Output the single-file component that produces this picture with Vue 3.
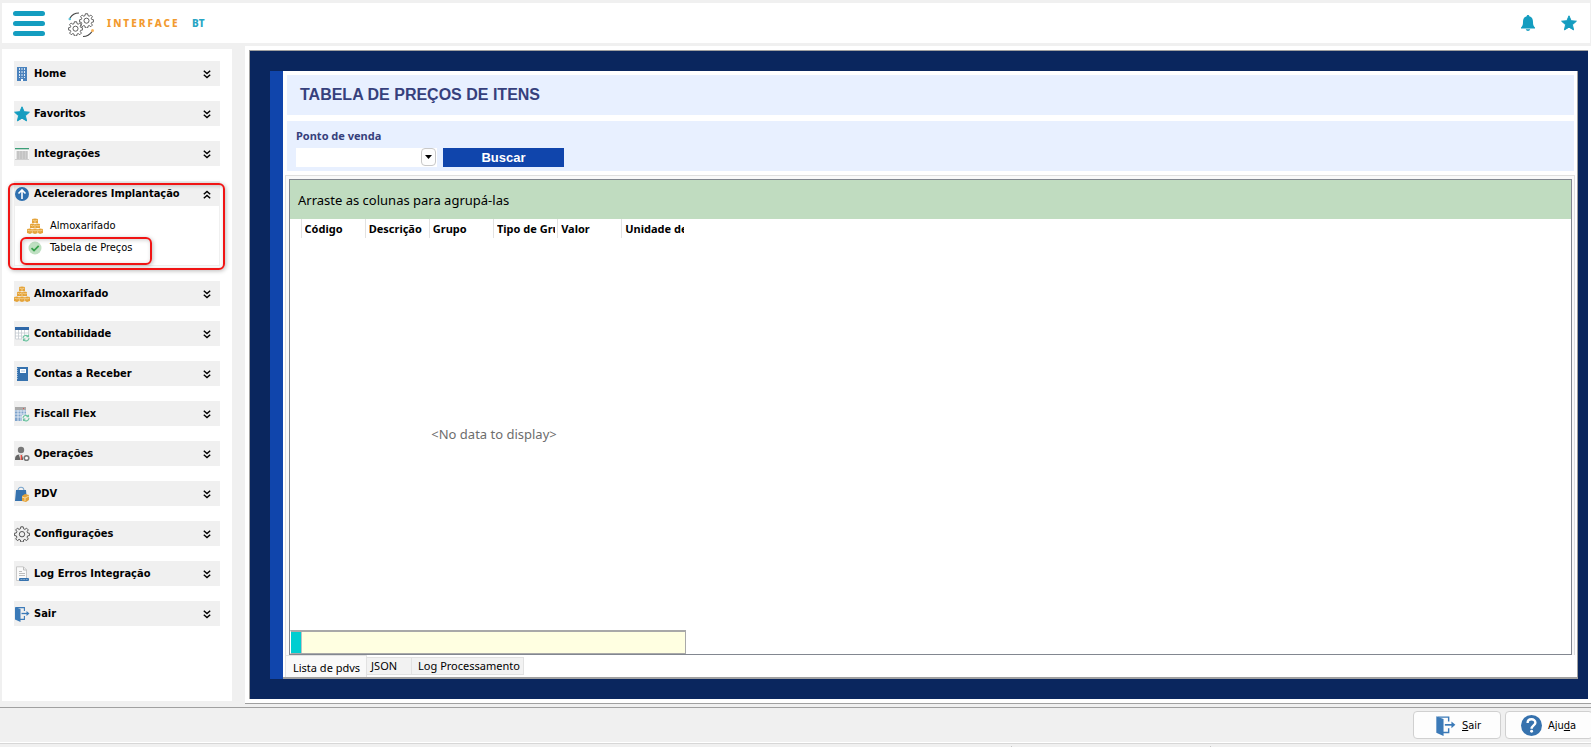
<script setup>
import { ref } from 'vue'

const groups = [
  { icon: 'building', label: 'Home' },
  { icon: 'star', label: 'Favoritos' },
  { icon: 'sheet', label: 'Integrações' },
  {
    icon: 'up',
    label: 'Aceleradores Implantação',
    items: [
      { icon: 'boxes', label: 'Almoxarifado' },
      { icon: 'check', label: 'Tabela de Preços', marked: true },
    ],
  },
  { icon: 'boxes', label: 'Almoxarifado' },
  { icon: 'calendar', label: 'Contabilidade' },
  { icon: 'book', label: 'Contas a Receber' },
  { icon: 'calc', label: 'Fiscall Flex' },
  { icon: 'user', label: 'Operações' },
  { icon: 'bag', label: 'PDV' },
  { icon: 'cog', label: 'Configurações' },
  { icon: 'log', label: 'Log Erros Integração' },
  { icon: 'door', label: 'Sair' },
]
const columns = ['Código', 'Descrição', 'Grupo', 'Tipo de Gru', 'Valor', 'Unidade de']
const tabs = ['Lista de pdvs', 'JSON', 'Log Processamento']
const activeTab = ref(0)
</script>

<template>
  <div class="app">
    <svg class="sprite" aria-hidden="true">
      <symbol id="building" viewBox="0 0 16 16">
        <path fill="#4a82bd" d="M3 1h10v14H3z" />
        <path stroke="#dce8f4" stroke-width="1" d="M5.500 2v10M8 2v10M10.500 2v10" />
        <path stroke="#4a82bd" stroke-width="1" d="M3 4.500h10M3 7.500h10M3 10.500h10" />
        <path fill="#fff" d="M7 13h2v2H7z" />
      </symbol>
      <symbol id="star" viewBox="0 0 16 16">
        <path fill="#149dc0" stroke="#149dc0" stroke-linejoin="round" d="M8 .8l2.100 4.900 5.300.5-4 3.500 1.200 5.200L8 12.200l-4.600 2.700 1.200-5.200-4-3.500 5.300-.5z" />
      </symbol>
      <symbol id="sheet" viewBox="0 0 16 16">
        <path fill="#cfcfcf" d="M1 3h14v11H1z" />
        <path fill="#3c9f78" d="M1 2h14v1.500H1z" />
        <path fill="#f8f8f8" d="M1 3.500h14v1.500H1zM1 4h1.500v9H1zM13.500 4H15v9h-1.500z" />
        <path stroke="#b0b0b0" stroke-width=".7" d="M4 5v8M7 5v8M10 5v8M13 5v8" />
      </symbol>
      <symbol id="up" viewBox="0 0 16 16">
        <circle cx="8" cy="8" r="7" fill="#2f70b0" />
        <path fill="none" stroke="#fff" stroke-width="1.600" d="M8 13V4M4.500 7.500L8 4l3.500 3.500" />
      </symbol>
      <symbol id="boxes" viewBox="0 0 16 16">
        <path fill="#e4a33a" d="M5 1l3-.5 3 .5v4H5zM3 6l3-.5 2 .5 2-.5 3 .5v4H3zM0 11l3-.5 2 .5 3-.5 3 .5 2-.5 3 .5v4l-3 1-2-1-3 1-3-1-2 1-3-1z" />
        <path stroke="#f6d79c" stroke-width=".8" fill="none" d="M5.500 2l2.500 1 2.500-1M8 3v2M8 6.500v3.500M3.500 7l2 1 2-1M9 7l2 1 2-1M5.300 11.500v3.500M10.700 11.500v3.500M.5 12l2.500 1 2-1M6 12l2 1 2-1M11 12l2 1 2.500-1" />
      </symbol>
      <symbol id="check" viewBox="0 0 16 16">
        <circle cx="8" cy="8" r="6.500" fill="#bfe0c2" />
        <path fill="none" stroke="#38a04c" stroke-width="1.700" d="M4.500 8.200L7 10.500l4.700-4.700" />
      </symbol>
      <symbol id="calendar" viewBox="0 0 16 16">
        <path fill="#fff" d="M1 1h14v12H1z" />
        <path fill="#2f68a8" d="M1 1h14v3H1z" />
        <path fill="none" stroke="#c5cbd2" stroke-width=".8" d="M1.500 4v9H9M4.500 4v9M7.500 4v9M10.500 4v5M14.500 4v5M1 7h14M1 10h9" />
        <path fill="#f0f0f0" d="M8 9h8v6H8z" />
        <path fill="none" stroke="#6cc3a0" stroke-width="1.100" d="M9 12a2.800 2.800 0 0 1 5-1.500M15 12a2.800 2.800 0 0 1-5 1.800M14.500 8.800v2h-2M9.500 15v-2h2" />
      </symbol>
      <symbol id="book" viewBox="0 0 16 16">
        <path fill="#3672ae" d="M3 1h11v14H3z" />
        <path stroke="#8fb2d5" stroke-dasharray="1 1" d="M3.500 2v12" />
        <path fill="#fff" d="M6 3h6v4H6z" />
        <path stroke="#aac4de" d="M7 5h4" />
      </symbol>
      <symbol id="calc" viewBox="0 0 16 16">
        <path fill="#7fa3cb" d="M1 1h11v14H1z" />
        <path fill="#aaa" d="M1 1h11v3H1z" />
        <path fill="#d9534f" d="M9 2h1v1H9z" />
        <path fill="none" stroke="#e8eef6" stroke-width=".9" d="M1 5h11M1 8h11M1 11h8M4 4v11M7 4v11M10 4v5" />
        <path fill="#f0f0f0" d="M8 9h8v6H8z" />
        <path fill="none" stroke="#6cc3a0" stroke-width="1.100" d="M9 12a2.800 2.800 0 0 1 5-1.500M15 12a2.800 2.800 0 0 1-5 1.800M14.500 8.800v2h-2M9.500 15v-2h2" />
      </symbol>
      <symbol id="user" viewBox="0 0 16 16">
        <circle cx="7" cy="4" r="3.200" fill="#777" />
        <path fill="#666" d="M1 14c0-4 1-5 4-5.500h4V14z" />
        <path fill="#fff" d="M5 8.500h4L7.500 14h-1z" />
        <path fill="#e14b3c" d="M6.500 9h1.500v5H6.500z" />
        <circle cx="12.500" cy="12" r="2.300" fill="#fff" stroke="#777" stroke-width="1.600" />
      </symbol>
      <symbol id="bag" viewBox="0 0 16 16">
        <path fill="none" stroke="#79a4cb" stroke-width="1.100" d="M4 5c0-5 6-5 6 0" />
        <path fill="#3672ae" d="M2 4h10l1 11H1z" />
        <path fill="#e4a33a" d="M8 10l3-2 4 1v5l-3 2-4-1z" />
        <path fill="none" stroke="#f8dca4" d="M8 11l3 1 4-2M11 12v3" />
      </symbol>
      <symbol id="cog" viewBox="0 0 16 16">
        <path fill="none" stroke="#555" stroke-linejoin="round" d="M6.800.8h2.400l.4 2 1.300.6 1.700-1.200 1.700 1.700-1.200 1.700.5 1.300 2 .4v2.200l-2 .4-.5 1.300 1.200 1.700-1.700 1.700-1.700-1.200-1.300.6-.4 2H6.800l-.4-2-1.300-.6-1.700 1.200-1.700-1.700 1.200-1.700-.5-1.300-2-.4V7.300l2-.4.5-1.300-1.200-1.700 1.700-1.700 1.700 1.200 1.300-.6z" />
        <circle cx="8" cy="8.200" r="2.700" fill="none" stroke="#555" />
      </symbol>
      <symbol id="log" viewBox="0 0 16 16">
        <path fill="#fafafa" stroke="#c8c8c8" d="M2.500.8h7l3 3V14.500h-10z" />
        <path fill="none" stroke="#bdbdbd" d="M9.500 1v3h3M5 5.500h3M5 7.500h6M5 9.500h6" />
        <rect x="5" y="12" width="10" height="3" rx="1" fill="#3672ae" />
        <path stroke="#7fa6cd" d="M6.500 13.500h7" stroke-dasharray="2 .7" />
      </symbol>
      <symbol id="door" viewBox="0 0 16 16">
        <path fill="none" stroke="#3b7ab8" stroke-width="1.100" d="M2 1.600h8.400V5M10.400 10v3.400H6" />
        <path fill="#3b7ab8" d="M1 1l5.500 2v13L1 13.500z" />
        <path fill="none" stroke="#3b7ab8" stroke-width="1.300" d="M7.500 7.500H14" />
        <path fill="#3b7ab8" d="M12.500 5l3 2.500-3 2.500z" />
      </symbol>
      <symbol id="down" viewBox="0 0 8 9">
        <path fill="none" stroke="#000" stroke-width="1.500" d="M.8.800L4 3.500 7.200.8M.8 4.800L4 7.500l3.200-2.700" />
      </symbol>
    </svg>

    <header class="top">
      <button class="burger" aria-label="Menu"><i /><i /><i /></button>
      <svg class="logo" viewBox="0 0 27 26" aria-hidden="true">
        <use href="#cog" x="11" y="1" width="15" height="15" />
        <use href="#cog" x="0" y="9" width="15" height="15" />
        <path fill="none" stroke="#444" stroke-width="1.200" d="M2 6C4 2.500 7 1 11 1M15 24.500c4 0 7-2 9-5" />
        <circle cx="1.800" cy="7" r="1.300" fill="#5cc3d8" />
        <circle cx="24.500" cy="18.500" r="1.500" fill="#f9b45c" />
      </svg>
      <span class="brand">INTERFACE</span>
      <span class="brand-bt">BT</span>
      <button class="top-icon bell" aria-label="Notificações">
        <svg viewBox="0 0 16 16"><path fill="#149dc0" d="M8 0c1 0 1.300.6 1.300 1.300C12 2 13 4 13 7c0 3 .5 4 2 5.500v1H1v-1C2.500 11 3 10 3 7c0-3 1-5 3.700-5.700C6.700.6 7 0 8 0zM5.800 14.300h4.400C9.800 16.500 6.200 16.500 5.800 14.300z" /></svg>
      </button>
      <button class="top-icon" aria-label="Favoritos"><svg><use href="#star" /></svg></button>
    </header>

    <div class="middle">
      <nav class="side">
        <section v-for="g in groups" :key="g.label" class="group" :class="{ open: g.items }">
          <button class="group-head" :aria-expanded="!!g.items">
            <svg class="ico"><use :href="'#' + g.icon" /></svg>
            <span>{{ g.label }}</span>
            <svg class="chev"><use href="#down" /></svg>
          </button>
          <div v-if="g.items" class="group-body">
            <a v-for="it in g.items" :key="it.label" href="#" class="item" :class="{ marked: it.marked }">
              <svg class="ico"><use :href="'#' + it.icon" /></svg>{{ it.label }}
            </a>
          </div>
        </section>
      </nav>

      <main class="main">
        <div class="navy">
          <div class="strip"></div>
          <div class="window">
            <div class="title"><h1>TABELA DE PREÇOS DE ITENS</h1></div>
            <form class="filter" @submit.prevent>
              <label for="pdv">Ponto de venda</label>
              <div class="filter-row">
                <div class="combo">
                  <select id="pdv"><option></option></select>
                  <span class="drop" aria-hidden="true"><svg viewBox="0 0 7 4"><path d="M0 0h7L3.500 4z" /></svg></span>
                </div>
                <button class="search">Buscar</button>
              </div>
            </form>
            <div class="pages">
              <div class="grid">
                <div class="groupbar">Arraste as colunas para agrupá-las</div>
                <div class="sheet">
                  <table>
                    <thead>
                      <tr>
                        <td class="mark"></td>
                        <th v-for="c in columns" :key="c"><div>{{ c }}</div></th>
                      </tr>
                    </thead>
                  </table>
                  <p class="empty">&lt;No data to display&gt;</p>
                  <div class="summary"><i /></div>
                </div>
              </div>
            </div>
            <div class="tabs" role="tablist">
              <button v-for="(t, i) in tabs" :key="t" role="tab" :class="{ on: activeTab === i }" :aria-selected="activeTab === i" @click="activeTab = i">{{ t }}</button>
            </div>
          </div>
        </div>
      </main>
    </div>

    <footer class="actions">
      <button class="action"><svg><use href="#door" /></svg><span><u>S</u>air</span></button>
      <button class="action help">
        <svg viewBox="0 0 20 20"><circle cx="10" cy="10" r="10" fill="#3672ae" /><path fill="none" stroke="#fff" stroke-width="2.300" d="M6.300 7.500C6.300 3 13.700 3 13.700 7.300c0 2.500-3.600 2.700-3.600 5.700" /><circle cx="10.100" cy="15.500" r="1.400" fill="#fff" /></svg>
        <span>Aju<u>d</u>a</span>
      </button>
    </footer>
    <div class="status"><i /><i /></div>
  </div>
</template>

<style>
body {
  background: #f0f0f0;
}
</style>

<style scoped>
* {
  box-sizing: border-box;
}
.app {
  display: flex;
  flex-direction: column;
  min-height: 100vh;
  padding-top: 3px;
  overflow: hidden;
  background: #f0f0f0;
  color: #000;
  font: 11px/14px "DejaVu Sans Condensed", "DejaVu Sans", sans-serif;
}
button {
  padding: 0;
  border: 0;
  background: none;
  color: inherit;
  font: inherit;
}
.sprite {
  position: absolute;
  width: 0;
  height: 0;
}
.top {
  display: flex;
  align-items: center;
  height: 40px;
  margin: 0 1px 0 2px;
  padding: 0 13px 0 11px;
  background: #fff;
}
.burger {
  display: grid;
  gap: 5px;
  width: 32px;
}
.burger i {
  height: 5px;
  border-radius: 3px;
  background: #149dc0;
}
.logo {
  width: 27px;
  height: 26px;
  margin: 4px 12px 0 23px;
}
.brand,
.brand-bt {
  font: 800 10px/14px "Noto Sans", sans-serif;
}
.brand {
  width: 85px;
  color: #f29a2e;
  letter-spacing: 2px;
}
.brand-bt {
  color: #28a5c4;
}
.top-icon {
  width: 16px;
  height: 16px;
}
.top-icon svg {
  display: block;
  width: 16px;
  height: 16px;
}
.bell {
  margin: 0 25px 0 auto;
}
.middle {
  flex: 1;
  display: flex;
  gap: 13px;
  padding: 3px 0 3px 2px;
  border-bottom: 1px solid #a0a0a0;
}
.side {
  width: 230px;
  flex: none;
  display: flex;
  flex-direction: column;
  gap: 15px;
  margin: 3px 0;
  padding: 12px;
  background: #fff;
}
.group {
  position: relative;
}
.group-head {
  display: flex;
  align-items: center;
  gap: 4px;
  width: 100%;
  height: 25px;
  padding: 1px 9px 0 0;
  background: #f0f0f0;
  font-weight: bold;
}
.ico {
  flex: none;
  width: 16px;
  height: 16px;
}
.chev {
  width: 8px;
  height: 9px;
  margin-left: auto;
}
.open .chev {
  transform: rotate(180deg);
}
.group-body {
  display: flex;
  flex-direction: column;
  gap: 6px;
  height: 60px;
  padding: 12px 0 0 12px;
  border: solid #f0f0f0;
  border-width: 0 1px 1px;
}
.item {
  position: relative;
  display: flex;
  align-items: center;
  gap: 7px;
  height: 16px;
  color: #000;
  text-decoration: none;
}
.open::after,
.marked::after {
  content: "";
  position: absolute;
  border: 2px solid #f01414;
  border-radius: 6px;
  box-shadow: 1px 1px 4px #0004, inset 1px 1px 4px #0003;
  pointer-events: none;
}
.open::after {
  inset: 2px -5px -4px -6px;
}
.marked::after {
  left: -7px;
  top: -3px;
  width: 128px;
  height: 24px;
}
.main {
  flex: 1;
  min-width: 0;
  display: flex;
  padding: 4px 0 4px 4px;
  border-bottom: 1px solid #a0a0a0;
  background: #fff;
}
.navy {
  flex: 1;
  min-width: 0;
  display: flex;
  margin-right: 3px;
  padding: 20px 10px 20px 20px;
  border: solid #a0a0a0;
  border-width: 1px 0 0 1px;
  background: #0a265e;
}
.strip {
  flex: none;
  width: 13px;
  background: #1045ac;
}
.window {
  flex: 1;
  min-width: 0;
  display: flex;
  flex-direction: column;
  padding-top: 4px;
  border-right: 1px solid #a0a0a0;
  border-bottom: 2px solid #a0a0a0;
  background: #fff;
}
.title,
.filter {
  margin: 0 3px 6px 4px;
  background: #e8f0ff;
}
.title {
  height: 40px;
  padding: 10px 13px;
}
h1 {
  margin: 0;
  color: #36407c;
  font: bold 16px/20px "Liberation Sans", Arial, sans-serif;
}
.filter {
  height: 50px;
  margin-bottom: 4px;
  padding: 8px 9px;
}
.filter label {
  display: block;
  margin-bottom: 5px;
  color: #36407c;
  font: bold 11px/14px "Noto Sans", sans-serif;
}
.filter-row {
  display: flex;
  gap: 6px;
}
.combo {
  position: relative;
  width: 141px;
  height: 19px;
}
.combo select {
  display: block;
  width: 100%;
  height: 100%;
  border: 0;
  appearance: none;
  background: #fff;
}
.drop {
  position: absolute;
  top: 0;
  right: 1px;
  display: grid;
  place-items: center;
  width: 15px;
  height: 18px;
  border: 1px solid #c8c8c8;
  border-radius: 4px;
  background: #fdfdfd;
  pointer-events: none;
}
.drop svg {
  width: 7px;
  height: 4px;
}
.search {
  width: 121px;
  height: 19px;
  background: #1045ac;
  color: #fff;
  font: bold 13px/19px "Liberation Sans", Arial, sans-serif;
}
.pages {
  flex: 1;
  display: flex;
  margin: 0 2px;
  padding: 3px 2px 0 3px;
  border: 1px solid #dfdfdf;
  border-bottom: 0;
  background: #f9f9f9;
}
.grid {
  flex: 1;
  display: flex;
  flex-direction: column;
  border: 1px solid #828790;
  background: #fff;
}
.groupbar {
  height: 39px;
  padding: 11px 8px;
  background: #c0dcc0;
  font: 13px/18px "Noto Sans", sans-serif;
}
.sheet {
  flex: 1;
  display: flex;
  flex-direction: column;
  width: 396px;
}
table {
  width: 100%;
  table-layout: fixed;
  border-collapse: collapse;
}
td,
th {
  height: 19px;
  padding: 0;
}
.mark {
  width: 11px;
}
th {
  padding: 0 2px 0 3px;
  border-left: 1px solid #e2e2e2;
  text-align: left;
  font: bold 11px/19px "Noto Sans", sans-serif;
}
th div {
  overflow: hidden;
  white-space: nowrap;
}
.empty {
  flex: 1;
  display: grid;
  place-items: center;
  margin: 0;
  padding-left: 12px;
  color: #6d6d6d;
  font: 13px/18px "Noto Sans", sans-serif;
}
.summary {
  height: 24px;
  border: 1px solid #a9a9a9;
  border-top-width: 2px;
  border-left-color: #fff;
  background: #ffffe1;
}
.summary i {
  display: block;
  width: 11px;
  height: 100%;
  border: solid #c0c0c0;
  border-width: 0 1px 0 0;
  background: #00ced1;
}
.tabs {
  display: flex;
  align-items: flex-start;
  height: 22px;
  margin-left: 2px;
}
.tabs button {
  height: 18px;
  margin-top: 2px;
  padding: 0 3px 0 6px;
  border: 1px solid #e2e2e2;
  border-left: 0;
  background: #f2f2f2;
  font: 11px/16px "Noto Sans", sans-serif;
}
.tabs button:nth-child(2) {
  padding: 0 14px 0 4px;
}
.tabs .on {
  height: 22px;
  margin-top: 0;
  padding: 2px 6px 0 7px;
  border-left: 1px solid #e2e2e2;
  border-bottom: 0;
  background: #f9f9f9;
}
.actions {
  display: flex;
  justify-content: flex-end;
  gap: 4px;
  padding: 3px 0;
  border-bottom: 1px solid #fff;
}
.action {
  display: flex;
  align-items: center;
  gap: 6px;
  width: 88px;
  height: 28px;
  padding-left: 21px;
  border: 1px solid #d0d0d0;
  border-radius: 4px;
  background: #fdfdfd;
}
.action span {
  padding-top: 2px;
}
.action svg {
  width: 21px;
  height: 21px;
}
.help {
  margin-right: -2px;
  padding-left: 15px;
}
.status {
  display: flex;
  gap: 198px;
  height: 4px;
  padding: 2px 380px 0 0;
  justify-content: flex-end;
  border-top: 1px solid #d7d7d7;
}
.status i {
  width: 1px;
  background: #c8c8c8;
}
</style>
